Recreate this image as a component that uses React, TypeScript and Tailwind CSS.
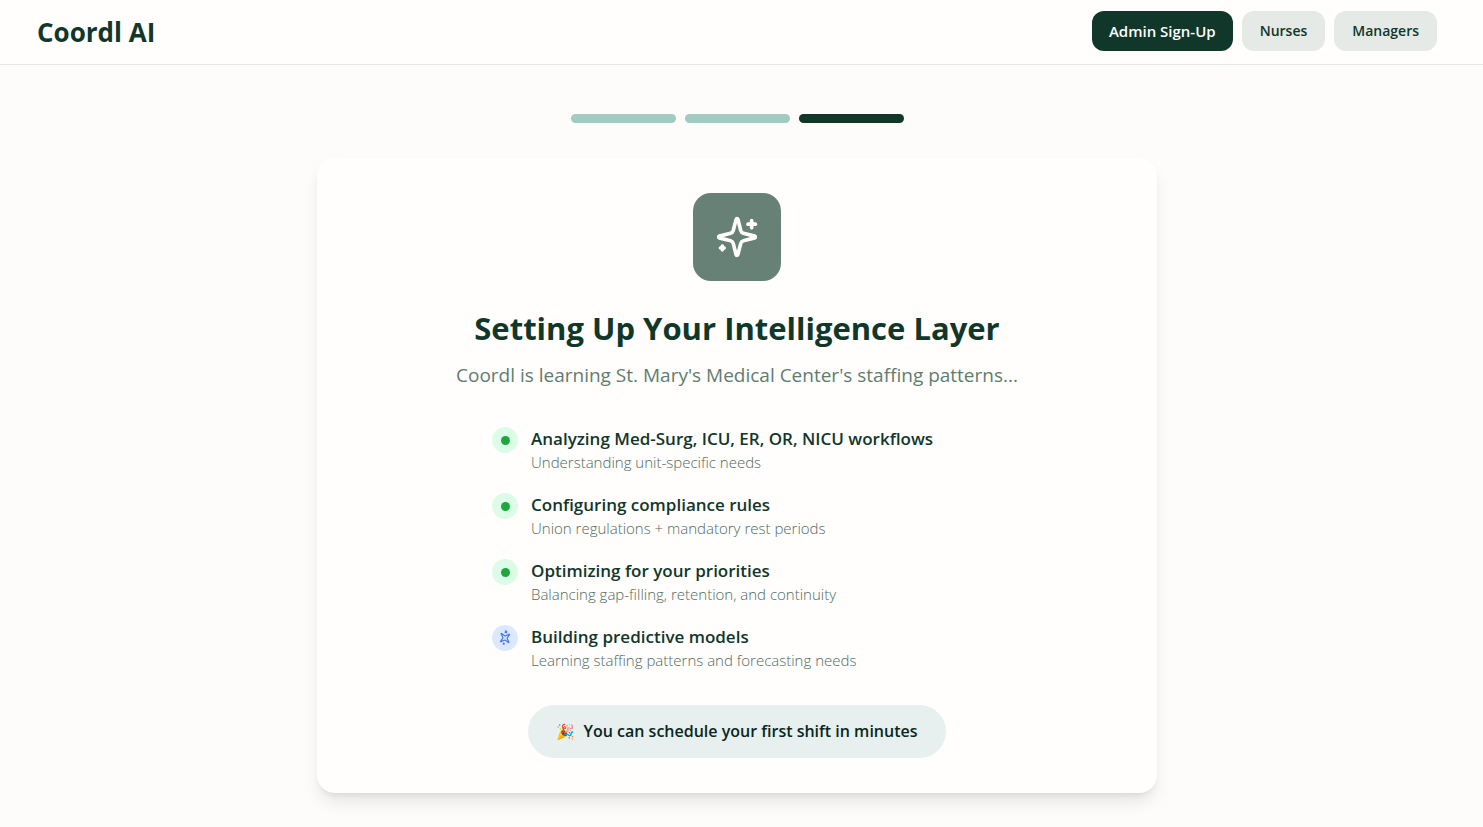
import clsx from "clsx"

type SetupTask = {
  title: string
  detail: string
  done: boolean
}

const navItems = [
  { label: "Admin Sign-Up", active: true },
  { label: "Nurses", active: false },
  { label: "Managers", active: false },
]

const steps = [1, 2, 3]
const currentStep = 3

const tasks: SetupTask[] = [
  {
    title: "Analyzing Med-Surg, ICU, ER, OR, NICU workflows",
    detail: "Understanding unit-specific needs",
    done: true,
  },
  {
    title: "Configuring compliance rules",
    detail: "Union regulations + mandatory rest periods",
    done: true,
  },
  {
    title: "Optimizing for your priorities",
    detail: "Balancing gap-filling, retention, and continuity",
    done: true,
  },
  {
    title: "Building predictive models",
    detail: "Learning staffing patterns and forecasting needs",
    done: false,
  },
]

const SparklesIcon = ({ className }: { className?: string }) => (
  <svg
    viewBox="0 0 24 24"
    fill="none"
    stroke="currentColor"
    strokeWidth="2"
    strokeLinecap="round"
    strokeLinejoin="round"
    className={className}
    aria-hidden="true"
  >
    <path d="M9.937 15.5A2 2 0 0 0 8.5 14.063l-6.135-1.582a.5.5 0 0 1 0-.962L8.5 9.936A2 2 0 0 0 9.937 8.5l1.582-6.135a.5.5 0 0 1 .963 0L14.063 8.5A2 2 0 0 0 15.5 9.937l6.135 1.581a.5.5 0 0 1 0 .964L15.5 14.063a2 2 0 0 0-1.437 1.437l-1.582 6.135a.5.5 0 0 1-.963 0z" />
    <path d="M20 3v4" />
    <path d="M22 5h-4" />
    <path d="M4 17v2" />
    <path d="M5 18H3" />
  </svg>
)

const Header = () => (
  <header className="border-b border-[#e1e8e5] bg-[#fffefd]">
    <div className="flex items-start justify-between py-[11px] pr-[46px] pl-[37px]">
      <span className="text-[26px] leading-[42px] font-bold">Coordl AI</span>
      <nav className="flex gap-[9px]">
        {navItems.map((item) => (
          <button
            key={item.label}
            type="button"
            className={clsx(
              "h-10 rounded-xl font-semibold",
              item.active
                ? "bg-[#10372a] px-[17px] text-[15px] text-[#fffefd]"
                : "bg-[#e5eae6] px-[18px] text-sm"
            )}
          >
            {item.label}
          </button>
        ))}
      </nav>
    </div>
  </header>
)

const TaskRow = ({ task }: { task: SetupTask }) => (
  <li className="flex items-start gap-[13px]">
    <span
      className={clsx(
        "mt-px flex size-[26px] shrink-0 items-center justify-center rounded-full",
        task.done ? "bg-[#dcfce7]" : "bg-[#dbe8fe]"
      )}
    >
      {task.done ? (
        <span className="size-[9px] rounded-full bg-[#1fa63c]" />
      ) : (
        <SparklesIcon className="size-[14px] -rotate-[40deg] text-[#4a74f0]" />
      )}
    </span>
    <div>
      <p className="text-[17px] leading-[26px] font-semibold">{task.title}</p>
      <p className="text-[15px] leading-5 font-light text-[#4f6a5f]">{task.detail}</p>
    </div>
  </li>
)

const App = () => {
  return (
    <div className="min-h-screen bg-[#fdfcfb] font-['Open_Sans',sans-serif] text-[#10372a]">
      <Header />
      <main className="flex flex-col items-center pt-[49px] pr-[9px] pb-[34px]">
        <div className="flex gap-[9px]">
          {steps.map((step) => (
            <div
              key={step}
              className={clsx(
                "h-[9px] w-[105px] rounded-full",
                step === currentStep ? "bg-[#10372a]" : "bg-[#9fcbc0]"
              )}
            />
          ))}
        </div>

        <section className="mt-[35px] flex w-full max-w-[840px] flex-col items-center rounded-[18px] bg-[#fffefd] p-[35px] shadow-[0_11px_17px_-3px_rgba(0,0,0,0.1),0_4px_7px_-4px_rgba(0,0,0,0.1)]">
          <div className="flex size-[88px] items-center justify-center rounded-[18px] bg-[#678177]">
            <SparklesIcon className="size-11 text-[#fffefd]" />
          </div>
          <h1 className="mt-[27px] text-center text-[31px] leading-10 font-bold">
            Setting Up Your Intelligence Layer
          </h1>
          <p className="mt-3 text-center text-[19px] leading-[31px] text-[#5f7c70]">
            Coordl is learning St. Mary's Medical Center's staffing patterns...
          </p>

          <ul className="mt-[35px] flex w-full max-w-[490px] flex-col gap-5">
            {tasks.map((task) => (
              <TaskRow key={task.title} task={task} />
            ))}
          </ul>

          <p className="mt-[35px] flex items-center gap-2 rounded-full bg-[#e7f0ef] px-7 py-[13px] text-[16px] leading-[27px] font-semibold text-[#0a2620]">
            <span className="text-[15px]">🎉</span>
            You can schedule your first shift in minutes
          </p>
        </section>
      </main>
    </div>
  )
}

export default App
